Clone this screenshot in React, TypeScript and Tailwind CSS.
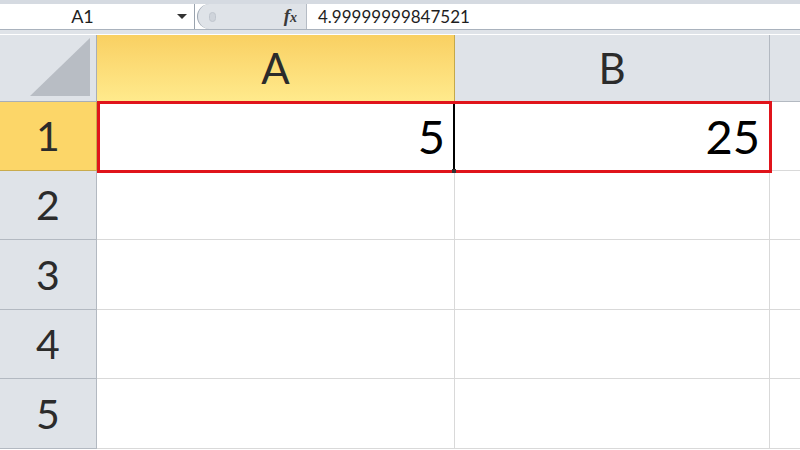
const font = { fontFamily: "Lato, 'Open Sans', sans-serif" }

const rows = [
  { n: "1", h: "h-[69px]", a: "5", b: "25" },
  { n: "2", h: "h-[69px]", a: "", b: "" },
  { n: "3", h: "h-[70px]", a: "", b: "" },
  { n: "4", h: "h-[69px]", a: "", b: "" },
  { n: "5", h: "h-[70px]", a: "", b: "" },
]

function FormulaBar() {
  return (
    <div className="bg-[#d5dae1] pt-[4px]">
      <div className="flex h-[26px] bg-white border-b border-[#a9b2bd]">
        <div className="relative flex w-[195px] items-center border-r border-[#9aa3ae]">
          <span className="w-[165px] text-center text-[18px] text-[#1e1e1e]">A1</span>
          <span className="absolute left-[177px] top-[10px] h-0 w-0 border-x-[5px] border-t-[5px] border-x-transparent border-t-[#333]" />
        </div>
        <div className="flex w-[110px] items-center bg-[#dfe3e8] border-r border-[#b5bcc5] rounded-l-[14px] border-l border-l-[#9ea7b2] ml-[2px]">
          <div className="ml-[11px] h-[10px] w-[7px] rounded-full bg-[#cfd4db] border border-[#c0c6ce]" />
          <div className="flex-1" />
          <span
            className="mr-[9px] text-[19px] font-bold italic text-[#3a3a3a]"
            style={{ fontFamily: "'Liberation Serif', serif" }}
          >
            f<span className="text-[14px]">x</span>
          </span>
        </div>
        <div className="flex flex-1 items-center pl-[11px] text-[17px] text-[#1e1e1e]">4.99999999847521</div>
      </div>
      <div className="h-[5px] bg-[#dfe3e8] border-b border-white" />
    </div>
  )
}

export default function App() {
  return (
    <div className="h-[450px] w-[800px] overflow-hidden bg-white" style={font}>
      <FormulaBar />
      <div className="relative">
        <div className="grid grid-cols-[97px_358px_315px_30px]">
          <div className="relative h-[67px] bg-[#dfe3e8] border-r border-b border-[#a8aeb6]">
            <svg className="absolute right-[6px] bottom-[5px]" width="60" height="58" viewBox="0 0 60 58">
              <polygon points="60,0 60,58 0,58" fill="#b8bdc4" />
            </svg>
          </div>
          <div className="flex h-[67px] items-center justify-center bg-gradient-to-b from-[#f9d062] to-[#ffea8c] border-r border-b border-[#c5a94a] text-[42px] text-[#2b2b2b]">
            A
          </div>
          <div className="flex h-[67px] items-center justify-center bg-[#dfe3e8] border-r border-b border-[#b3b9c1] text-[42px] text-[#2b2b2b]">
            B
          </div>
          <div className="h-[67px] bg-[#dfe3e8] border-b border-[#b3b9c1]" />
          {rows.map((r, i) => (
            <div key={r.n} className="contents">
              <div
                className={`flex ${r.h} items-center justify-center border-r border-b text-[41px] text-[#2b2b2b] ${
                  i === 0 ? "bg-[#fcd668] border-[#c9ab4d]" : "bg-[#dfe3e8] border-[#b3b9c1]"
                }`}
              >
                {r.n}
              </div>
              <div className={`flex ${r.h} items-center justify-end pr-[9px] border-r border-b border-[#d9d9d9] text-[47px] text-black`}>
                {r.a}
              </div>
              <div className={`flex ${r.h} items-center justify-end pr-[9px] border-r border-b border-[#d9d9d9] text-[47px] text-black`}>
                {r.b}
              </div>
              <div className={`${r.h} border-b border-[#d9d9d9]`} />
            </div>
          ))}
        </div>
        {/* selection outline A1:B1 */}
        <div className="pointer-events-none absolute left-[97px] top-[66px] h-[72px] w-[675px] border-[3px] border-[#e0141b]" />
        <div className="pointer-events-none absolute left-[453px] top-[69px] h-[67px] w-[2px] bg-black" />
        <div className="pointer-events-none absolute left-[452px] top-[134px] h-[4px] w-[4px] bg-[#333]" />
      </div>
    </div>
  )
}
